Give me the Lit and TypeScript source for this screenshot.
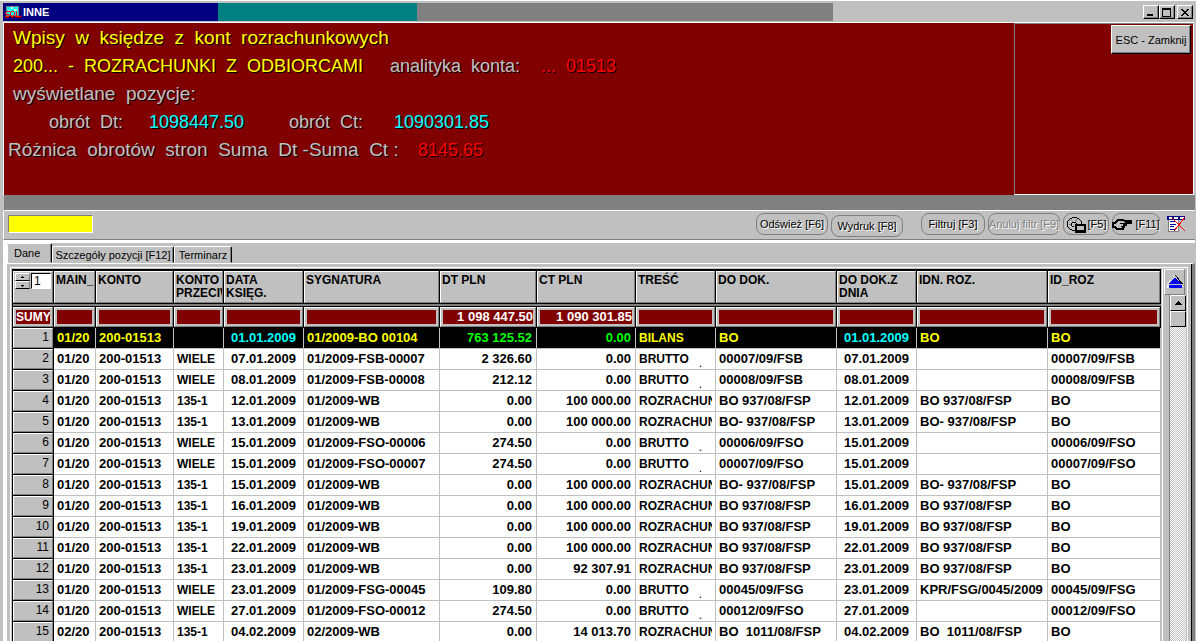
import { LitElement, html, css, svg } from "lit";
import { customElement, property, state } from "lit/decorators.js";
import { classMap } from "lit/directives/class-map.js";

type Row = string[];

interface Column {
  label: string;
  width: number;
  sum?: string;
  kind?: "amount" | "date" | "word";
}

const COLUMNS: Column[] = [
  { label: "MAIN_", width: 42 },
  { label: "KONTO", width: 78 },
  { label: "KONTO\nPRZECIW", width: 50, kind: "word" },
  { label: "DATA\nKSIĘG.", width: 80, kind: "date" },
  { label: "SYGNATURA", width: 136 },
  { label: "DT PLN", width: 97, sum: "1 098 447.50", kind: "amount" },
  { label: "CT PLN", width: 99, sum: "1 090 301.85", kind: "amount" },
  { label: "TREŚĆ", width: 80, kind: "word" },
  { label: "DO DOK.", width: 121 },
  { label: "DO DOK.Z\nDNIA", width: 80, kind: "date" },
  { label: "IDN. ROZ.", width: 131 },
  { label: "ID_ROZ", width: 113 },
];

const K = "200-01513";
const W = "WIELE";
const B = "BRUTTO";
const R = "ROZRACHUN";
const H = "100 000.00";

const ROWS: Row[] = [
  ["01/20", K, "", "01.01.2009", "01/2009-BO 00104", "763 125.52", "0.00", "BILANS", "BO", "01.01.2009", "BO", "BO"],
  ["01/20", K, W, "07.01.2009", "01/2009-FSB-00007", "2 326.60", "0.00", B, "00007/09/FSB", "07.01.2009", "", "00007/09/FSB"],
  ["01/20", K, W, "08.01.2009", "01/2009-FSB-00008", "212.12", "0.00", B, "00008/09/FSB", "08.01.2009", "", "00008/09/FSB"],
  ["01/20", K, "135-1", "12.01.2009", "01/2009-WB", "0.00", H, R, "BO 937/08/FSP", "12.01.2009", "BO 937/08/FSP", "BO"],
  ["01/20", K, "135-1", "13.01.2009", "01/2009-WB", "0.00", H, R, "BO- 937/08/FSP", "13.01.2009", "BO- 937/08/FSP", "BO"],
  ["01/20", K, W, "15.01.2009", "01/2009-FSO-00006", "274.50", "0.00", B, "00006/09/FSO", "15.01.2009", "", "00006/09/FSO"],
  ["01/20", K, W, "15.01.2009", "01/2009-FSO-00007", "274.50", "0.00", B, "00007/09/FSO", "15.01.2009", "", "00007/09/FSO"],
  ["01/20", K, "135-1", "15.01.2009", "01/2009-WB", "0.00", H, R, "BO- 937/08/FSP", "15.01.2009", "BO- 937/08/FSP", "BO"],
  ["01/20", K, "135-1", "16.01.2009", "01/2009-WB", "0.00", H, R, "BO 937/08/FSP", "16.01.2009", "BO 937/08/FSP", "BO"],
  ["01/20", K, "135-1", "19.01.2009", "01/2009-WB", "0.00", H, R, "BO 937/08/FSP", "19.01.2009", "BO 937/08/FSP", "BO"],
  ["01/20", K, "135-1", "22.01.2009", "01/2009-WB", "0.00", H, R, "BO 937/08/FSP", "22.01.2009", "BO 937/08/FSP", "BO"],
  ["01/20", K, "135-1", "23.01.2009", "01/2009-WB", "0.00", "92 307.91", R, "BO 937/08/FSP", "23.01.2009", "BO 937/08/FSP", "BO"],
  ["01/20", K, W, "23.01.2009", "01/2009-FSG-00045", "109.80", "0.00", B, "00045/09/FSG", "23.01.2009", "KPR/FSG/0045/2009", "00045/09/FSG"],
  ["01/20", K, W, "27.01.2009", "01/2009-FSO-00012", "274.50", "0.00", B, "00012/09/FSO", "27.01.2009", "", "00012/09/FSO"],
  ["02/20", K, "135-1", "04.02.2009", "02/2009-WB", "0.00", "14 013.70", R, "BO  1011/08/FSP", "04.02.2009", "BO  1011/08/FSP", "BO"],
];

const icon = (w: number, h: number, body: unknown) => html`<svg
  width=${w} height=${h} viewBox="0 0 ${w} ${h}" aria-hidden="true" shape-rendering="crispEdges">${body}</svg>`;

const sqlIcon = icon(16, 12, svg`
  <rect x="1" y="0" width="13" height="10" fill="#808080"/>
  <rect x="2" y="1" width="11" height="8" fill="#00ffff"/>
  <path d="M6 1h2v2H6zM9 3h3v2H9zM3 4h2v1H3z" fill="#c0ffff"/>
  <path d="M1 5h4v1H1zM0 6h1v2H0zM1 8h3v1H1zM4 9h1v1H4zM0 10h4v1H0z
    M6 5h3v1H6zM5 6h1v4H5zM9 6h1v3H9zM6 10h3v1H6zM8 9h1v1H8zM10 10h1v1h-1z
    M11 5h1v6h-1zM12 10h4v1h-4z" fill="#ff0000"/>
  <path d="M0 11h5v1H0zM6 11h3v1H6zM11 11h5v1h-5z" fill="#800000"/>`);

const diskIcon = icon(20, 17, svg`
  <path d="M6 1h5M4 2h2M11 2h2M3 3h1M13 3h1M2 4h1M14 4h1M2 11h1M3 12h1M4 13h2M6 14h3"
    fill="none" stroke="#000" transform="translate(0 .5)"/>
  <path d="M1 5h1v6H1zM15 5h1v3h-1z" fill="#000"/>
  <path d="M5 4l3 3M11 3L9 6M3 8h3" stroke="#808080"/>
  <path d="M6 6h4v1H6zM5 7h1v3H5zM10 7h1v2h-1zM6 10h2v1H6z" fill="#000"/>
  <path d="M9 8h11v9H9z" fill="#000"/><path d="M11 10h7v4h-7z" fill="#c0c0c0"/>`);

const handIcon = icon(21, 13, svg`
  <path d="M1 5h2l3-3h5l2 1h6v2h-5v2h-2v2h-1v2H5L3 9H1z" fill="#c0c0c0" stroke="#000" stroke-width="2"/>
  <path d="M8 5h5v1H8zM9 8h3v1H9z" fill="#000"/>`);

const gridOffIcon = icon(20, 18, svg`
  <path d="M0 1h18v4H0z" fill="#000080"/><path d="M2 2h3v2H2zM7 2h4v2H7zM13 2h4v2h-4z" fill="#fff"/>
  <path d="M1 5h11v12H1z" fill="#fff"/><path d="M1 5h1v12H1zM11 5h1v12h-1zM1 16h11v1H1z" fill="#808080"/>
  <path d="M3 6h5v1H3zM3 9h6v1H3zM3 11h4v1H3zM3 14h6v1H3z" fill="#0000a0"/>
  <path d="M5 3l13 13M18 2L7 16" stroke="#ff0000" fill="none"/>`);

@customElement("tool-button")
class ToolButton extends LitElement {
  @property() label = "";
  @property({ type: Boolean }) disabled = false;

  static styles = css`
    :host { display: block; }
    button {
      display: flex; align-items: center; justify-content: center; gap: 2px;
      box-sizing: border-box; width: 100%; height: 22px; padding: 0;
      border: 1px solid #808080; border-radius: 8px; background: #c0c0c0;
      color: #000; font: 11px/14px "Liberation Sans", Arial, sans-serif;
      white-space: nowrap; text-shadow: 1px 1px #fff;
    }
    button:disabled { color: #808080; }
  `;

  render() {
    return html`<button type="button" ?disabled=${this.disabled}><slot></slot><span>${this.label}</span></button>`;
  }
}

@customElement("ledger-table")
class LedgerTable extends LitElement {
  @state() selected = 0;

  static styles = css`
    :host { display: block; min-width: 0; font-family: "Liberation Sans", Arial, sans-serif; }
    table { width: 100%; table-layout: fixed; border-collapse: separate; border-spacing: 0; }
    th, td { box-sizing: border-box; padding: 0; text-align: left; vertical-align: top; }
    .clip { overflow: hidden; white-space: pre; }

    .head th { border-right: 1px solid #000; border-bottom: 1px solid #000; background: #c0c0c0; }
    .cap {
      box-sizing: border-box; height: 32px; padding: 2px 0 0 1px; overflow: hidden;
      border: 1px solid; border-color: #fff #808080 #808080 #fff;
      font: bold 12px/13px "Liberation Sans", Arial, sans-serif;
    }
    .label { white-space: pre-line; }
    .corner { display: flex; gap: 1px; padding: 1px; }
    .spins { display: grid; grid-template-rows: 8px 8px; width: 15px; height: 16px; }
    .spins button {
      display: grid; place-items: center; padding: 0; background: #c0c0c0;
      border: 1px solid; border-color: #fff #808080 #000 #fff;
    }
    .spins svg { display: block; }
    .page {
      box-sizing: border-box; width: 20px; height: 16px; padding: 0 2px; border: 1px solid;
      border-color: #000 #fff #fff #000; background: #fff;
      font: 12px/14px "Liberation Sans", Arial, sans-serif;
    }

    .rule td { height: 3px; background: #808080; border-bottom: 1px solid #000; }

    .sums th, .sums td { border-right: 1px solid #000; border-bottom: 1px solid #000; background: #c0c0c0; }
    .frame {
      box-sizing: border-box; height: 20px; padding: 2px;
      border: 1px solid; border-color: #fff #808080 #808080 #fff;
    }
    .fill {
      height: 14px; background: #800000; color: #fff; text-align: right;
      font-weight: bold; font-size: 13px; line-height: 14px;
    }
    .sums .fill.name { text-align: center; font-size: 12px; }

    .data th {
      height: 21px; background: #c0c0c0; border-right: 1px solid #000; border-bottom: 1px solid #000;
      font-weight: normal; font-size: 12px;
    }
    .num {
      box-sizing: border-box; height: 20px; padding-right: 3px; line-height: 16px; text-align: right;
      border: 1px solid; border-color: #fff #808080 #808080 #fff;
    }
    .data td {
      height: 21px; padding: 0 3px; background: #fff;
      border-right: 1px solid #c0c0c0; border-bottom: 1px solid #c0c0c0;
      font-weight: bold; font-size: 13px; line-height: 20px;
    }
    .data td .clip { height: 20px; }
    .data .amount, .data .date { text-align: right; }
    .data .date { padding-right: 7px; }
    .data .amount { padding-right: 4px; }
    .data .word { font-size: 12px; }
    .on td { background: #000; color: #ff0; }
    .on .date { color: #0ff; }
    .on .amount { color: #0f0; }
    .low { vertical-align: -4px; line-height: 0; font-weight: normal; }
  `;

  private text(value: string) {
    return value === B ? html`${value}<span class="low">   .</span>` : value;
  }

  render() {
    return html`<table>
      <colgroup>
        <col style="width:41px" />
        ${COLUMNS.map((c) => html`<col style="width:${c.width}px" />`)}
      </colgroup>
      <thead>
        <tr class="head">
          <th>
            <div class="cap corner">
              <div class="spins">
                <button type="button" aria-label="Poprzednia">${icon(5, 3, svg`<path d="M2 0h1v1H2zM1 1h3v1H1z"/>`)}</button>
                <button type="button" aria-label="Następna">${icon(5, 3, svg`<path d="M1 1h3v1H1zM2 2h1v1H2z"/>`)}</button>
              </div>
              <input class="page" aria-label="Pozycja" value="1" />
            </div>
          </th>
          ${COLUMNS.map((c) => html`<th scope="col"><div class="cap label">${c.label}</div></th>`)}
        </tr>
        <tr class="rule"><td colspan="13"></td></tr>
        <tr class="sums">
          <th scope="row"><div class="frame"><div class="fill name clip">SUMY</div></div></th>
          ${COLUMNS.map((c) => html`<td><div class="frame"><div class="fill clip">${c.sum ?? ""}</div></div></td>`)}
        </tr>
      </thead>
      <tbody>
        ${ROWS.map((row, i) => html`<tr
          class=${classMap({ data: true, on: i === this.selected })}
          @click=${() => (this.selected = i)}>
          <th scope="row"><div class="num">${i + 1}</div></th>
          ${row.map((v, c) => html`<td class=${COLUMNS[c].kind ?? ""}><div class="clip">${this.text(v)}</div></td>`)}
        </tr>`)}
      </tbody>
    </table>`;
  }
}

@customElement("app-root")
class AppRoot extends LitElement {
  static styles = css`
    :host {
      display: flex; flex-direction: column; box-sizing: border-box;
      height: 100vh; overflow: hidden; padding: 2px 1px 0 3px;
      background: #c0c0c0; border-top: 1px solid #fff;
      color: #000; font: 11px/14px "Liberation Sans", Arial, sans-serif;
    }
    svg { display: block; flex: none; }
    button { font: inherit; color: inherit; padding: 0; }

    .title {
      display: flex; align-items: center; flex: none; height: 18px; padding: 0 2px 0 2px; margin-bottom: 1px;
      background: linear-gradient(to right, #000080 18%, #008080 18% 34.7%, #808080 34.7% 69.6%, #c0c0c0 69.6%);
      color: #fff; gap: 2px;
    }
    .title h1 { flex: 1; margin: 0; font: bold 11px/18px "Liberation Sans", Arial, sans-serif; }
    .sys { display: flex; }
    .sys button {
      display: grid; place-items: center; box-sizing: border-box; width: 16px; height: 14px;
      background: #c0c0c0; border: 1px solid; border-color: #fff #000 #000 #fff; box-shadow: inset -1px -1px #808080;
    }
    .sys .close { margin-left: 2px; }

    .info {
      display: flex; flex: none; height: 172px; background: #800000; margin-right: 1px;
      border-top: 1px solid #fff; border-left: 1px solid #fff;
    }
    .lines {
      flex: 1; padding: 1px 0 0 9px; color: #c0c0c0; font-size: 18px; line-height: 28px;
      text-shadow: 1px 1px #000;
    }
    .line { display: flex; white-space: pre; }
    .large { font-size: 19px; }
    .yellow { color: #ff0; }
    .cyan { color: #0ff; }
    .red { color: #f00; }
    .account { width: 377px; }
    .analytic { width: 151px; }
    .turn { padding-left: 36px; width: 100px; }
    .dt { width: 140px; }
    .ct { width: 105px; }
    .diff { margin-left: -5px; }
    .diff .text { width: 410px; }
    .side {
      box-sizing: border-box; width: 180px; padding: 1px 2px; display: flex; justify-content: flex-end; align-items: flex-start;
      border: 1px solid; border-color: #808080 #fff #fff #808080;
    }
    .esc {
      width: 80px; height: 29px; background: #c0c0c0; white-space: nowrap;
      border: 1px solid; border-color: #fff #000 #000 #fff; box-shadow: inset -1px -1px #808080;
    }
    .band { flex: none; height: 15px; margin-left: 1px; background: #808080; border-bottom: 1px solid #fff; }

    .tools {
      display: flex; flex: none; align-items: center; box-sizing: border-box; height: 29px; padding: 0 8px 2px 4px;
      border-left: 1px solid #fff; border-bottom: 1px solid #808080;
    }
    .search {
      box-sizing: border-box; width: 85px; height: 18px; padding: 0 2px; background: #ff0; font: inherit;
      border: 1px solid; border-color: #808080 #fff #fff #808080;
    }
    .grow { flex: 1; }
    .set { display: flex; gap: 3px; align-items: center; }
    .w72 { width: 72px; }
    .w64 { width: 64px; }
    .w46 { width: 46px; }
    .w48 { width: 48px; }
    .gap { margin-left: 15px; }
    .low { padding-top: 4px; }
    .off { border: 0; background: none; margin-left: 4px; }

    .body { flex: 1; min-height: 0; display: flex; flex-direction: column; border-top: 3px solid #fff; border-left: 4px solid #fff; }
    .tabs { display: flex; flex: none; align-items: flex-end; height: 20px; }
    .tabs button {
      box-sizing: border-box; height: 17px; border: 1px solid; border-color: #fff #000 transparent #fff;
      border-radius: 2px 2px 0 0; background: #c0c0c0; box-shadow: inset -1px 0 #808080; white-space: nowrap;
    }
    .tabs .active { width: 45px; height: 20px; padding: 0 7px 0 6px; text-align: left; }
    .tabs .detail { width: 122px; }
    .tabs .term { width: 58px; }

    .panel {
      flex: 1; min-height: 0; display: flex; overflow: hidden; padding: 3px 4px 0 3px;
      border-top: 1px solid #fff; border-right: 3px solid #808080; box-shadow: inset -1px 0 #000;
    }
    .sheet {
      flex: 1; min-width: 0; display: flex; overflow: hidden;
      border: 1px solid #fff; border-bottom: 0; padding-top: 1px;
    }
    .grid {
      flex: 1; min-width: 0; overflow: hidden; margin-left: 1px;
      border-top: 2px solid #000; border-left: 1px solid #000; background: #c0c0c0;
    }
    .scroll {
      flex: none; box-sizing: border-box; width: 25px; margin-left: 1px; display: flex; flex-direction: column;
      border-left: 1px solid #fff; border-right: 1px solid #c0c0c0;
    }
    .scroll button {
      display: grid; place-items: center; background: #c0c0c0; box-sizing: border-box;
      border: 1px solid; border-color: #fff #808080 #808080 #fff;
    }
    .scroll .top { height: 26px; margin: 0 1px; }
    .bar { flex: 1; display: flex; flex-direction: column; margin-left: 6px; border-left: 1px solid #808080; }
    .bar .up, .bar .thumb { height: 16px; flex: none; border-color: #fff #000 #000 #fff; }
    .track { flex: 1; background: repeating-conic-gradient(#fff 0 25%, #c0c0c0 0 50%) 0 0 / 2px 2px; }
  `;

  render() {
    return html`
      <header class="title">
        ${sqlIcon}
        <h1>INNE</h1>
        <div class="sys">
          <button type="button" aria-label="Minimalizuj">${icon(10, 8, svg`<path d="M1 6h6v2H1z" fill="#000"/>`)}</button>
          <button type="button" aria-label="Maksymalizuj">${icon(10, 9, svg`<path d="M0 0h9v9H0zM1 2v6h7V2z" fill="#000" fill-rule="evenodd"/>`)}</button>
          <button type="button" class="close" aria-label="Zamknij">${icon(8, 7, svg`<path d="M0 0h2v1h1v1h2V1h1V0h2v1H7v1H6v1H5v1h1v1h1v1h1v1H6V6H5V5H3v1H2v1H0V6h1V5h1V4h1V3H2V2H1V1H0z" fill="#000"/>`)}</button>
        </div>
      </header>

      <section class="info">
        <div class="lines">
          <div class="line large yellow">Wpisy  w  księdze  z  kont  rozrachunkowych</div>
          <div class="line"><span class="account yellow">200...  -  ROZRACHUNKI  Z  ODBIORCAMI</span><span class="analytic">analityka  konta:</span><span class="red">...  01513</span></div>
          <div class="line large">wyświetlane  pozycje:</div>
          <div class="line"><span class="turn">obrót  Dt:</span><span class="dt cyan">1098447.50</span><span class="ct">obrót  Ct:</span><span class="cyan">1090301.85</span></div>
          <div class="line diff"><span class="text large">Różnica  obrotów  stron  Suma  Dt -Suma  Ct :</span><span class="red">8145.65</span></div>
        </div>
        <div class="side"><button type="button" class="esc">ESC - Zamknij</button></div>
      </section>
      <div class="band"></div>

      <div class="tools">
        <input class="search" aria-label="Szukaj" />
        <div class="grow"></div>
        <div class="set">
          <tool-button class="w72" label="Odśwież [F6]"></tool-button>
          <tool-button class="w72 low" label="Wydruk [F8]"></tool-button>
          <tool-button class="w64 gap" label="Filtruj [F3]"></tool-button>
          <tool-button class="w72" label="Anuluj filtr [F9]" disabled></tool-button>
          <tool-button class="w46" label="[F5]">${diskIcon}</tool-button>
          <tool-button class="w48" label="[F11]">${handIcon}</tool-button>
          <button type="button" class="off" aria-label="Usuń układ">${gridOffIcon}</button>
        </div>
      </div>

      <main class="body">
        <nav class="tabs">
          <button type="button" class="active">Dane</button>
          <button type="button" class="detail">Szczegóły pozycji [F12]</button>
          <button type="button" class="term">Terminarz</button>
        </nav>
        <div class="panel">
          <div class="sheet">
            <div class="grid"><ledger-table></ledger-table></div>
            <div class="scroll">
              <button type="button" class="top" aria-label="Na początek">${icon(16, 14, svg`
                <path d="M7 0h1L0 9h2z" fill="#fff"/><path d="M8 0h1l7 9h-2z" fill="#000"/>
                <path d="M8 2l6 7H2z" fill="#0000ff"/><path d="M2 10h13v3H2z" fill="#0000ff"/><path d="M0 10h2v3H0z" fill="#fff"/>`)}</button>
              <div class="bar">
                <button type="button" class="up" aria-label="W górę">${icon(7, 4, svg`<path d="M3 0h1v1H3zM2 1h3v1H2zM1 2h5v1H1zM0 3h7v1H0z" fill="#000"/>`)}</button>
                <button type="button" class="thumb" aria-label="Suwak"></button>
                <div class="track"></div>
              </div>
            </div>
          </div>
        </div>
      </main>
    `;
  }
}
